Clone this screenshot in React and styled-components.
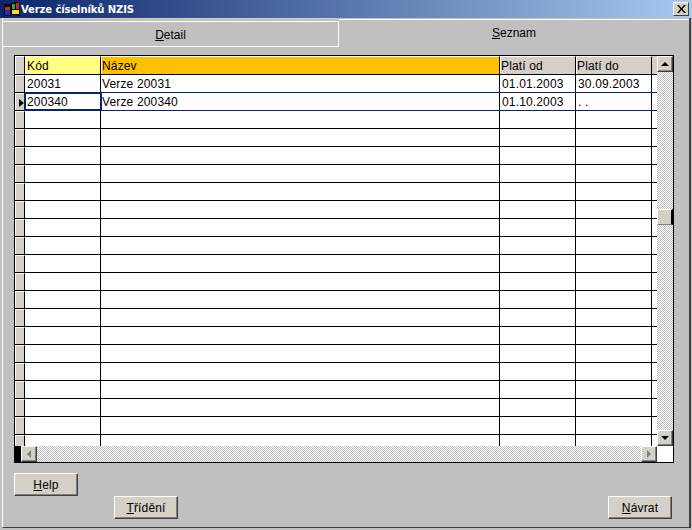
import styled, { createGlobalStyle } from "styled-components";

const COLUMNS = ["76px", "399px", "76px", "76px", "1fr"];

const ROWS = [
  { code: "20031", name: "Verze 20031", from: "01.01.2003", to: "30.09.2003" },
  { code: "200340", name: "Verze 200340", from: "01.10.2003", to: ". .", current: true },
];
const ROW_COUNT = 21;

const GlobalStyle = createGlobalStyle`
  html, body {
    margin: 0;
    padding: 0;
    background: #c0c0c0;
  }
  body {
    font-family: "Liberation Sans", Arial, sans-serif;
    font-size: 12px;
    color: #000;
  }
`;

function WindowsLogo() {
  return (
    <svg width="16" height="16" viewBox="0 0 16 16" style={{ flex: "none" }}>
      <path d="M0 3h7v11h-1v1h-5v-1h-1z" fill="#000" />
      <path d="M1 6h5v3h-5z" fill="#d8232a" />
      <path d="M1 9h5v5h-5z" fill="#2030c0" />
      <path d="M7 2h3v-1h4v1h2v13h-3v-1h-6z" fill="#000" />
      <path d="M8 3h3v5h-3z" fill="#20b040" />
      <path d="M12 2h3v6h-3z" fill="#d8232a" />
      <path d="M8 9h7v4h-7z" fill="#f0e020" />
    </svg>
  );
}

function Underlined({ letter, rest }) {
  return (
    <>
      <u>{letter}</u>
      {rest}
    </>
  );
}

export default function App() {
  const blanks = Array.from({ length: ROW_COUNT - ROWS.length }, (_, i) => ({ id: i }));

  return (
    <Window>
      <GlobalStyle />
      <TitleBar>
        <WindowsLogo />
        <TitleText>Verze číselníků NZIS</TitleText>
        <CloseButton>
          <svg width="9" height="8" viewBox="0 0 9 8">
            <path d="M0 0h2l2.500 3L7 0h2L5.500 4 9 8H7L4.500 5 2 8H0l3.500-4z" fill="#000" />
          </svg>
        </CloseButton>
      </TitleBar>

      <Frame>
        <Tabs>
          <Tab>
            <Underlined letter="D" rest="etail" />
          </Tab>
          <ActiveTab>
            <Underlined letter="S" rest="eznam" />
          </ActiveTab>
        </Tabs>

        <Panel>
          <GridFrame>
            <GridBody>
              <HeaderRow>
                <Indicator $header />
                <HeaderCell $bg="#ffff80" $indent={1}>Kód</HeaderCell>
                <HeaderCell $bg="#ffc000">Název</HeaderCell>
                <HeaderCell>Platí od</HeaderCell>
                <HeaderCell>Platí do</HeaderCell>
                <HeaderFiller />
              </HeaderRow>
              {ROWS.map((row) => (
                <Row key={row.code} $filled>
                  <Indicator>{row.current && <Pointer />}</Indicator>
                  <Cell $selected={row.current}>{row.code}</Cell>
                  <Cell $indent={1}>{row.name}</Cell>
                  <Cell>{row.from}</Cell>
                  <Cell>{row.to}</Cell>
                  <Filler />
                </Row>
              ))}
              {blanks.map((row) => (
                <Row key={row.id}>
                  <Indicator />
                  <Cell />
                  <Cell />
                  <Cell />
                  <Cell />
                  <Filler />
                </Row>
              ))}
            </GridBody>

            <VScroll>
              <ScrollButton>
                <ArrowUp />
              </ScrollButton>
              <VTrack>
                <VThumb />
              </VTrack>
              <ScrollButton>
                <ArrowDown />
              </ScrollButton>
            </VScroll>

            <HScroll>
              <BlackBlock />
              <ScrollButton>
                <ArrowLeft />
              </ScrollButton>
              <HTrack />
              <ScrollButton>
                <ArrowRight />
              </ScrollButton>
            </HScroll>
            <Corner />
          </GridFrame>

          <Footer>
            <HelpButton>
              <Underlined letter="H" rest="elp" />
            </HelpButton>
            <SortButton>
              <Underlined letter="T" rest="řídění" />
            </SortButton>
            <BackButton>
              <Underlined letter="N" rest="ávrat" />
            </BackButton>
          </Footer>
        </Panel>
      </Frame>
    </Window>
  );
}

const Window = styled.div`
  width: 692px;
  height: 530px;
  box-sizing: border-box;
  display: flex;
  flex-direction: column;
  overflow: hidden;
  background: #c0c0c0;
`;

const TitleBar = styled.div`
  height: 18px;
  flex: none;
  display: flex;
  align-items: center;
  gap: 1px;
  padding: 0 3px 0 4px;
  background: linear-gradient(90deg, #0a246a, #a6caf0);
`;

const TitleText = styled.span`
  flex: 1;
  color: #fff;
  font-family: "DejaVu Sans", Verdana, sans-serif;
  font-size: 10px;
  font-weight: 700;
  letter-spacing: -0.1px;
  white-space: nowrap;
`;

const CloseButton = styled.div`
  width: 16px;
  height: 14px;
  box-sizing: border-box;
  display: flex;
  align-items: center;
  justify-content: center;
  background: #d4d0c8;
  border: 1px solid;
  border-color: #fff #404040 #404040 #fff;
`;

const Frame = styled.div`
  flex: 1;
  min-height: 0;
  display: flex;
  flex-direction: column;
  margin: 0 1px 2px 2px;
  border-left: 1px solid #fff;
  border-right: 2px solid #404040;
  border-bottom: 1px solid #404040;
`;

const Tabs = styled.div`
  flex: none;
  height: 29px;
  display: flex;
  align-items: flex-end;
`;

const Tab = styled.div`
  width: 336px;
  height: 26px;
  box-sizing: border-box;
  display: flex;
  align-items: center;
  justify-content: center;
  padding-top: 2px;
  border: 1px solid #fff;
  border-left: none;
  box-shadow: 0 -2px 0 #c0c0c0, 0 -3px 0 #d4d0c8;
`;

const ActiveTab = styled.div`
  flex: 1;
  height: 28px;
  box-sizing: border-box;
  display: flex;
  align-items: center;
  justify-content: center;
  padding-bottom: 2px;
  border-top: 1px solid #fff;
`;

const Panel = styled.div`
  flex: 1;
  display: flex;
  flex-direction: column;
  padding: 8px 0 0 11px;
`;

const GridFrame = styled.div`
  width: 660px;
  height: 408px;
  box-sizing: border-box;
  flex: none;
  display: grid;
  grid-template-columns: 1fr 16px;
  grid-template-rows: 1fr 16px;
  background: #fff;
  border: 1px solid #000;
  overflow: hidden;
`;

const GridBody = styled.div`
  min-height: 0;
  overflow: hidden;
`;

const HeaderRow = styled.div`
  height: 18px;
  display: grid;
  grid-template-columns: 10px ${COLUMNS.join(" ")};
  grid-template-rows: 18px;
  border-bottom: 1px solid #000;
  background: #d4d0c8;
`;

const Row = styled.div`
  height: 17px;
  display: grid;
  grid-template-columns: 10px ${COLUMNS.join(" ")};
  grid-template-rows: 17px;
  border-bottom: 1px solid ${(p) => (p.$filled ? "#0a246a" : "#000")};
`;

const Indicator = styled.div`
  position: relative;
  box-sizing: border-box;
  background: #d4d0c8;
  border-top: 1px solid #fff;
  border-left: 1px solid #fff;
  border-right: 1px solid #000;
  box-shadow: 0 1px 0 #000;
`;

const Pointer = styled.span`
  position: absolute;
  left: 3px;
  top: 5px;
  width: 0;
  height: 0;
  border-left: 5px solid #000;
  border-top: 4px solid transparent;
  border-bottom: 4px solid transparent;
`;

const HeaderCell = styled.div`
  box-sizing: border-box;
  padding: 1px 0 0 ${(p) => p.$indent ?? 0}px;
  line-height: 16px;
  letter-spacing: 0.15px;
  background: ${(p) => p.$bg || "#d4d0c8"};
  border-right: 1px solid #000;
  border-top: 1px solid #fff;
  border-left: 1px solid #fff;
  white-space: nowrap;
`;

const HeaderFiller = styled.div`
  background: #d4d0c8;
`;

const Cell = styled.div`
  box-sizing: border-box;
  padding-left: ${(p) => p.$indent ?? 2}px;
  line-height: 18px;
  letter-spacing: 0.15px;
  border-right: 1px solid #000;
  white-space: nowrap;
  background: #fff;
  ${(p) => p.$selected && "outline: 2px solid #0a246a; outline-offset: -1px; position: relative;"}
`;

const Filler = styled.div`
  background: #fff;
`;

const Dither = `
  background: repeating-conic-gradient(#c0c0c0 0 25%, #fff 0 50%) 0 0 / 2px 2px;
`;

const VScroll = styled.div`
  display: flex;
  flex-direction: column;
  min-height: 0;
`;

const ScrollButton = styled.div`
  flex: none;
  width: 16px;
  height: 16px;
  box-sizing: border-box;
  display: flex;
  align-items: center;
  justify-content: center;
  background: #d4d0c8;
  border: 1px solid;
  border-color: #fff #404040 #404040 #fff;
  box-shadow: inset -1px -1px 0 #808080;
`;

const VTrack = styled.div`
  flex: 1;
  padding-top: 137px;
  ${Dither}
`;

const VThumb = styled(ScrollButton)`
  border-color: #fff #000 #808080 #fff;
  border-right-width: 2px;
  box-shadow: none;
`;

const HScroll = styled.div`
  display: flex;
  min-width: 0;
`;

const BlackBlock = styled.div`
  width: 6px;
  background: #000;
`;

const HTrack = styled.div`
  flex: 1;
  ${Dither}
`;

const Corner = styled.div`
  background: #fff;
`;

const ArrowUp = styled.span`
  border-left: 4px solid transparent;
  border-right: 4px solid transparent;
  border-bottom: 4px solid #000;
`;

const ArrowDown = styled.span`
  border-left: 4px solid transparent;
  border-right: 4px solid transparent;
  border-top: 4px solid #000;
`;

const ArrowLeft = styled.span`
  border-top: 4px solid transparent;
  border-bottom: 4px solid transparent;
  border-right: 4px solid #808080;
`;

const ArrowRight = styled.span`
  border-top: 4px solid transparent;
  border-bottom: 4px solid transparent;
  border-left: 4px solid #808080;
`;

const Footer = styled.div`
  display: grid;
  width: 658px;
  grid-template-columns: 100px 64px 1fr 64px;
  grid-template-rows: 23px 23px;
  margin-top: 10px;
`;

const PushButton = styled.div`
  height: 23px;
  box-sizing: border-box;
  display: flex;
  align-items: center;
  justify-content: center;
  background: #d4d0c8;
  border: 1px solid;
  border-color: #fff #404040 #404040 #fff;
  box-shadow: inset -1px -1px 0 #808080;
  letter-spacing: 0.15px;
`;

const HelpButton = styled(PushButton)`
  grid-column: 1;
  grid-row: 1;
  width: 64px;
`;

const SortButton = styled(PushButton)`
  grid-column: 2;
  grid-row: 2;
`;

const BackButton = styled(PushButton)`
  grid-column: 4;
  grid-row: 2;
`;
